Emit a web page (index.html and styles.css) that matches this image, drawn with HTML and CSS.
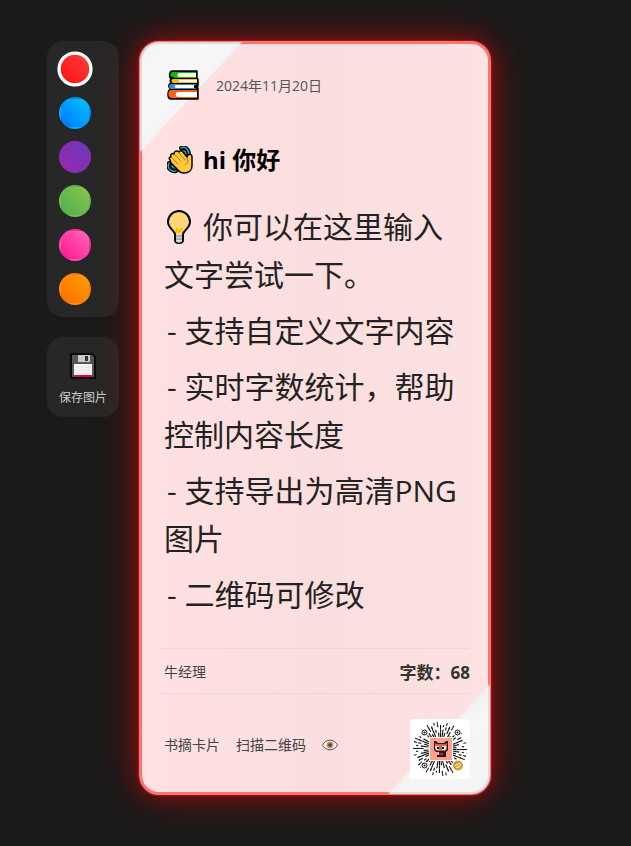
FILE: index.html
```html
<!DOCTYPE html>
<html lang="zh-CN">
<head>
<meta charset="utf-8">
<meta name="viewport" content="width=device-width, initial-scale=1">
<title>书摘卡片</title>
<link rel="stylesheet" href="styles.css">
</head>
<body>
<main class="workspace">
  <aside class="tools">
    <div class="palette">
      <button class="swatch red active" type="button" aria-label="红色"></button>
      <button class="swatch blue" type="button" aria-label="蓝色"></button>
      <button class="swatch purple" type="button" aria-label="紫色"></button>
      <button class="swatch green" type="button" aria-label="绿色"></button>
      <button class="swatch pink" type="button" aria-label="粉色"></button>
      <button class="swatch orange" type="button" aria-label="橙色"></button>
    </div>
    <button class="save" type="button">
      <svg class="save-icon" viewBox="0 0 26 26" aria-hidden="true">
        <path d="M1 1h21l3 3v21H1z" fill="#454545" stroke="#0b0b0b" stroke-width="2"/>
        <path d="M2 2h20l2 2.500V24H2z" fill="#555"/>
        <path d="M8 2h12v7H8z" fill="#c9c9c9"/>
        <path d="M15 3h3v5h-3z" fill="#333"/>
        <path d="M4 11h18v12H4z" fill="#f5f5f5"/>
        <path d="M5 14h16M5 17h16M5 20h16" stroke="#e6e6e6"/>
        <path d="M4 22h18v2H4z" fill="#e9004f"/>
      </svg>
      <span>保存图片</span>
    </button>
  </aside>

  <article class="card">
    <header class="card-header">
      <svg class="book-icon" viewBox="0 0 32 30" aria-hidden="true">
        <path d="M5 1h25v8h1v7l-2 2h2v11H4c-4 0-4-9 0-10-3-1-3-5 0-6-1-1-1-3 0-4-3-3-1-8 1-8z" fill="#050505" stroke="#050505" stroke-width="1.500" stroke-linejoin="round"/>
        <path d="M6 2h5v5H6c-4 0-3-5 0-5z" fill="#14b80b"/>
        <path d="M8 2h21v1H12c-1 1-1 3 0 4h17v1H7z" fill="#14b80b"/>
        <path d="M12 3h17v4H12c-2 0-2-4 0-4z" fill="#fff"/>
        <path d="M6 9h24v1H14v2h16v1H6c-2 0-2-4 0-4z" fill="#ffb900"/>
        <path d="M12 10h18v2H12z" fill="#fff"/>
        <path d="M4 14h25v1H10v3h19v1H4c-3-1-2-5 0-5z" fill="#2f89d9"/>
        <path d="M9 15h18v3H9c-2 0-2-3 0-3z" fill="#fff"/>
        <path d="M4 20h26v2H10v5h20v1H4c-4-1-3-8 0-8z" fill="#f7630c"/>
        <path d="M11 22h19v5H11c-3 0-3-5 0-5z" fill="#fff"/>
      </svg>
      <time class="date" datetime="2024-11-20">2024年11月20日</time>
    </header>

    <h1 class="title">
      <svg class="wave-icon" viewBox="0 0 27 28" aria-hidden="true">
        <path d="M14 2c4-2 8 1 8 7M16 5c2 0 3 1 3 4M2 17c-2 4 1 9 7 8M5 19c0 2 1 3 4 3" fill="none" stroke="#050505" stroke-width="4" stroke-linecap="round"/>
        <path d="M14 2c4-2 8 1 8 7M16 5c2 0 3 1 3 4M2 17c-2 4 1 9 7 8M5 19c0 2 1 3 4 3" fill="none" stroke="#27a7bd" stroke-width="1.500" stroke-linecap="round"/>
        <path d="M4 17l-1-3c-2-2 0-3 1-3-1-3 1-4 3-3 0-3 3-4 5-2 1-2 3-1 4 0l4 5c1-4 5-3 5 0v9c0 4-3 7-8 7-3 0-5-1-7-4z" fill="#ffc83d" stroke="#050505" stroke-width="1.500" stroke-linejoin="round"/>
        <path d="M5 12l6 6M8 9l6 6M12 7l6 7M20 12l1 4-3 3" fill="none" stroke="#ba7809" stroke-linecap="round"/>
      </svg>
      <span>hi 你好</span>
    </h1>

    <div class="content">
      <p><svg class="bulb-icon" viewBox="0 0 24 34" aria-hidden="true">
        <path d="M8 24C7 20 1 18 1 12a11 11 0 0 1 22 0c0 6-6 8-7 12v6c0 4-8 4-8 0z" fill="#ffd679" stroke="#050505" stroke-width="2"/>
        <path d="M9 19l1 4m5-4l-1 4M8 19h2l2 3 2-3h2" fill="none" stroke="#ffb900" stroke-width="1.500"/>
        <path d="M9 24h6v7c-1 2-5 2-6 0z" fill="#ddd"/>
        <path d="M9 26h6m-6 3h6" stroke="#777"/>
      </svg>你可以在这里输入文字尝试一下。</p>
      <p class="point">- 支持自定义文字内容</p>
      <p class="point">- 实时字数统计，帮助控制内容长度</p>
      <p class="point">- 支持导出为高清PNG图片</p>
      <p class="point">- 二维码可修改</p>
    </div>

    <div class="meta">
      <span class="author">牛经理</span>
      <span class="count">字数：68</span>
    </div>

    <footer class="card-footer">
      <div class="labels">
        <span>书摘卡片</span>
        <span>扫描二维码</span>
        <svg class="eye-icon" viewBox="0 0 16 12" aria-hidden="true">
          <path d="M.5 6C4-.5 12-.5 15.500 6 12 12.500 4 12.500.5 6z" fill="#fff5f5" stroke="#555"/>
          <circle cx="8" cy="6" r="3.500" fill="#d98d66"/>
          <circle cx="8" cy="6" r="1.800" fill="#444"/>
        </svg>
      </div>
      <svg class="qr" viewBox="0 0 60 60" role="img" aria-label="二维码">
        <g fill="none" stroke="#111">
          <circle cx="30" cy="30" r="14" stroke-width="5" pathLength="48" stroke-dasharray=".6 .4 .6 .4 .6 .4 .6 1.400"/>
          <circle cx="30" cy="30" r="18" stroke-width="3" pathLength="48" stroke-dasharray=".5 .5 .5 1.500"/>
          <circle cx="30" cy="30" r="21" stroke-width="3" pathLength="48" stroke-dasharray=".4 1.600 .4 .6 .4 2.600"/>
          <circle cx="30" cy="30" r="23" stroke-width="2" pathLength="48" stroke-dasharray=".4 .6 .4 1.600 .4 .6"/>
          <circle cx="30" cy="30" r="25.500" stroke-width="3" pathLength="48" stroke-dasharray=".3 1.700 .3 .7 .3 2.700 .3 1.700"/>
        </g>
        <g fill="#fff">
          <circle cx="14.500" cy="13.500" r="4"/><circle cx="47.500" cy="13.500" r="4"/><circle cx="14.500" cy="46.500" r="4"/><circle cx="48" cy="46.500" r="6"/>
        </g>
        <g fill="#fff" stroke="#111">
          <circle cx="14.500" cy="13.500" r="2.500"/><circle cx="47.500" cy="13.500" r="2.500"/><circle cx="14.500" cy="46.500" r="2.500"/>
        </g>
        <g fill="#111">
          <circle cx="14.500" cy="13.500" r="1"/><circle cx="47.500" cy="13.500" r="1"/><circle cx="14.500" cy="46.500" r="1"/>
        </g>
        <path d="M19 18h24v24H19z" fill="#fff"/>
        <path d="M20 19h22v22H20z" fill="#ffa08c"/>
        <path d="M24 22h2l2 2h6l2-2h2v9l-2 2v5h-9v-2h2v-3h-3l-2-2z" fill="#2a1719"/>
        <path d="M25 24l2 1h8l2-1v6l-2 2h-8l-2-2z" fill="#c46a52"/>
        <path d="M25 27h4v4h-3zm7 0h4v3l-1 1h-3z" fill="#ffe9cd"/>
        <path d="M27 28h2v2h-2zm5 0h2v2h-2z" fill="#111"/>
        <path d="M29 34h4v2h-4z" fill="#8c4138"/>
        <circle cx="48" cy="46.500" r="5" fill="#d19b35"/>
        <path d="M45 47l2-2 2 3-1 1-2-1m2-3l1-1 2 2-2 2" fill="none" stroke="#fff0c5"/>
      </svg>
    </footer>
  </article>
</main>
</body>
</html>
```
FILE: styles.css
```css
* {
  box-sizing: border-box;
}

body {
  margin: 0;
  min-height: 100vh;
  background: #1a1a1a;
  color: #222;
  font-family: "Open Sans", "Noto Sans CJK SC", sans-serif;
}

button {
  padding: 0;
  font: inherit;
  cursor: pointer;
}

.workspace {
  display: grid;
  grid-template-columns: 1fr minmax(0, 352px) 1fr;
  align-items: start;
  gap: 20px;
  padding: 41px 1px 41px 0;
}

.tools {
  display: flex;
  flex-direction: column;
  justify-self: end;
  gap: 20px;
  width: 72px;
}

.palette,
.save {
  display: flex;
  flex-direction: column;
  padding: 12px;
  border: 0;
  border-radius: 16px;
  background: #272727;
}

.palette {
  gap: 12px;
}

.swatch {
  width: 32px;
  height: 32px;
  border: 2px solid transparent;
  border-radius: 50%;
}

.swatch.active {
  border: 3px solid #fff;
  transform: scale(1.1);
}

.red { background-image: linear-gradient(45deg, #ff1010, #ff4040); }
.blue { background-image: linear-gradient(45deg, #0072ff, #00c6ff); }
.purple { background-image: linear-gradient(45deg, #9c27b0, #673ab7); }
.green { background-image: linear-gradient(45deg, #4caf50, #8bc34a); }
.pink { background-image: linear-gradient(45deg, #ff1493, #ff69b4); }
.orange { background-image: linear-gradient(45deg, #ff6b00, #ffa000); }

.save {
  align-items: center;
  gap: 9px;
  height: 80px;
  padding: 16px 0 0;
  color: #ccc;
  font-size: 12px;
  line-height: 20px;
}

.save-icon {
  width: 26px;
  height: 26px;
}

.card {
  position: relative;
  padding: 17px 18px 13px;
  border: 3px solid #ff7272;
  border-radius: 20px;
  background: linear-gradient(90deg, #ffe1e1, #fbdede 50%, #fde2e2);
  box-shadow: 0 0 2px #f33, 0 0 20px rgba(255, 0, 0, .4), 0 0 40px rgba(255, 0, 0, .3), 0 0 60px rgba(255, 0, 0, .1);
}

.card::before,
.card::after {
  content: "";
  position: absolute;
  width: 100px;
  height: 108px;
  border: 2px solid #ddd;
}

.card::before {
  top: -2px;
  left: -2px;
  border-width: 2px 0 0 2px;
  border-radius: 19px 0 0;
  background: linear-gradient(135deg, #f5f5f5, #f7f7f7 40%, #f5f3f3 50%);
  clip-path: polygon(0 0, 100% 0, 0 100%);
}

.card::after {
  right: -2px;
  bottom: -2px;
  border-width: 0 2px 2px 0;
  border-radius: 0 0 19px;
  background: linear-gradient(315deg, #f3f3f3, #f6f6f6 40%, #f3f0f0 50%);
  clip-path: polygon(100% 0, 100% 100%, 0 100%);
}

.card > * {
  position: relative;
  z-index: 1;
}

.card-header {
  display: flex;
  align-items: center;
  gap: 17px;
  height: 48px;
  padding-left: 7px;
}

.date {
  color: #555;
  font-size: 14px;
}

.book-icon {
  width: 32px;
  height: 30px;
}

.title {
  display: flex;
  align-items: center;
  gap: 9px;
  margin: 33px 0 25px;
  padding-left: 7px;
  color: #000;
  font-size: 24px;
  line-height: 36px;
}

.wave-icon {
  width: 27px;
  height: 28px;
}

.content {
  padding: 0 4px;
  font-size: 30px;
  line-height: 48px;
}

.content p {
  margin: 0 0 8px;
}

.content p:last-child {
  margin-bottom: 29px;
}

.point {
  text-indent: 3px;
}

.bulb-icon {
  width: 24px;
  height: 34px;
  margin: 0 12px 0 3px;
  vertical-align: -6px;
}

.meta {
  display: flex;
  align-items: center;
  justify-content: space-between;
  height: 46px;
  border: solid #eed4d4;
  border-width: 1px 0;
}

.author {
  padding-left: 4px;
  color: #444;
  font-size: 14px;
}

.count {
  color: #333;
  font-size: 17px;
  font-weight: 700;
}

.card-footer {
  display: flex;
  align-items: center;
  justify-content: space-between;
  margin-top: 25px;
  padding-left: 4px;
}

.labels {
  display: flex;
  align-items: center;
  gap: 16px;
  padding-bottom: 8px;
  color: #444;
  font-size: 14px;
  line-height: 20px;
}

.eye-icon {
  width: 16px;
  height: 12px;
}

.qr {
  width: 60px;
  height: 60px;
  border-radius: 4px;
  background: #fff;
}
```
